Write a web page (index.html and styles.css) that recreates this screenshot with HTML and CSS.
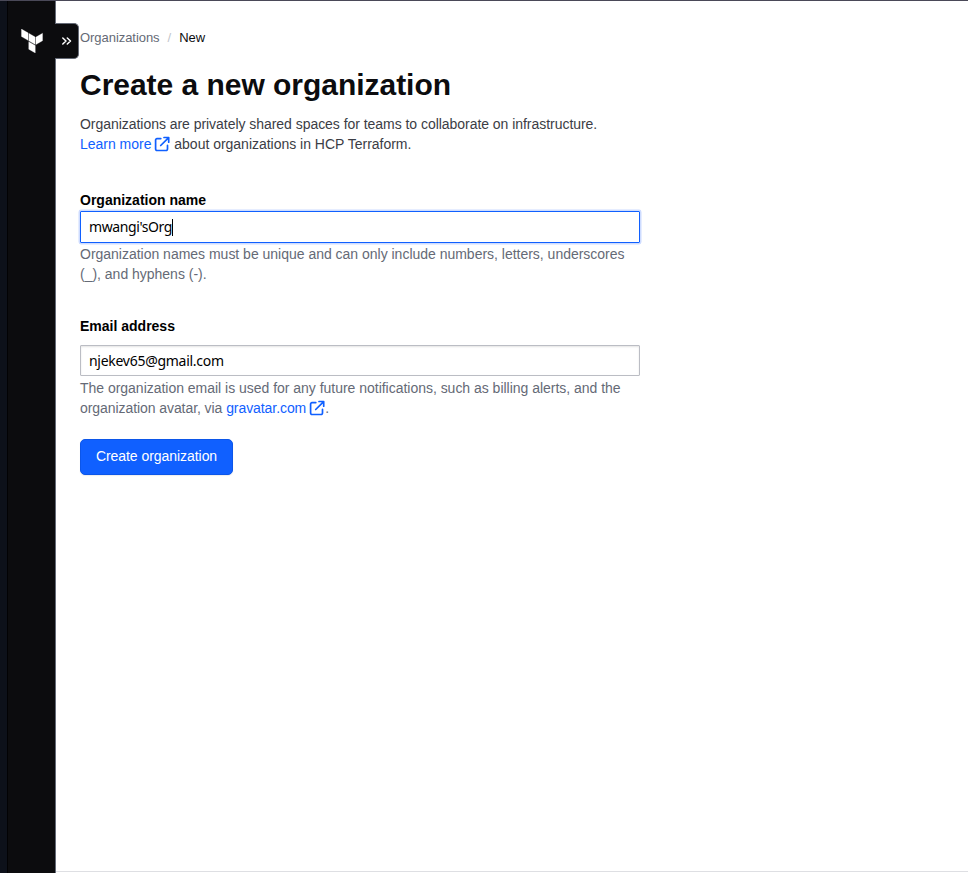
FILE: index.html
```html
<!DOCTYPE html>
<html lang="en">
<head>
<meta charset="utf-8">
<title>Create a new organization</title>
<link rel="stylesheet" href="styles.css">
</head>
<body>
<svg class="defs" aria-hidden="true">
  <symbol id="external" viewBox="0 0 16 16">
    <path d="M10 1.5h4.7v4.7M14.4 1.8 6.7 9.5M6.8 2.6H3a1.4 1.4 0 0 0-1.4 1.4v9.1A1.4 1.4 0 0 0 3 14.5h9.1a1.4 1.4 0 0 0 1.4-1.4V9.4" fill="none" stroke="currentColor" stroke-width="1.7" stroke-linecap="round" stroke-linejoin="round"/>
  </symbol>
</svg>
<div class="app">
  <div class="edge"></div>
  <nav class="sidebar">
    <svg class="logo" viewBox="0 0 24 24" fill="#fff" stroke="#fff" stroke-width=".25"><path d="M1.44 0v7.575l6.561 3.79V3.787zm21.12 4.227l-6.561 3.791v7.574l6.56-3.787zM8.72 4.23v7.575l6.561 3.787V8.018zm0 8.405v7.575L15.28 24v-7.578z"/></svg>
    <button class="toggle" aria-label="Open menu"><svg viewBox="0 0 16 16" fill="none" stroke="#fff" stroke-width="1.5" stroke-linecap="round" stroke-linejoin="round"><path d="m4.8 5 3.2 3-3.2 3M9.3 5l3.2 3-3.2 3"/></svg></button>
  </nav>
  <main class="content">
    <div class="crumbs"><span class="parent">Organizations</span><span class="slash">/</span><span>New</span></div>
    <h1>Create a new organization</h1>
    <p class="intro">Organizations are privately shared spaces for teams to collaborate on infrastructure.<br><span class="more"><a>Learn more<svg class="ext"><use href="#external"/></svg></a> about organizations in HCP Terraform.</span></p>
    <div class="label name-label">Organization name</div>
    <div class="input focused"><span class="name">mwangi'sOrg</span><span class="caret"></span></div>
    <p class="help">Organization names must be unique and can only include numbers, letters, underscores<br>(_), and hyphens (-).</p>
    <div class="label email-label">Email address</div>
    <div class="input"><span class="email">njekev65@gmail.com</span></div>
    <p class="help email-help">The organization email is used for any future notifications, such as billing alerts, and the<br><span class="via">organization avatar, via <a>gravatar.com<svg class="ext"><use href="#external"/></svg></a>.</span></p>
    <button class="submit">Create organization</button>
  </main>
</div>
</body>
</html>
```
FILE: styles.css
```css
* { box-sizing: border-box; }
body { margin: 0; background: #fff; color: #0c0c0e; font: 14px/20px "Liberation Sans", Arial, sans-serif; }
.defs { position: absolute; width: 0; height: 0; }
.app { display: flex; height: 873px; border-top: 1px solid #4a4958; overflow: hidden; }
.edge { width: 8px; background: #0d111a; border-right: 1px solid #020204; }
.sidebar { position: relative; width: 48px; background: #0c0c0e; border-right: 1px solid #656a76; }
.logo { display: block; width: 24px; height: 24px; margin: 28px 0 0 12px; }
.toggle { position: absolute; left: 47px; top: 22px; width: 24px; height: 36px; padding: 0; border: 1px solid #656a76; border-left: 0; border-radius: 0 5px 5px 0; background: #0c0c0e; }
.toggle svg { display: block; width: 16px; height: 16px; margin: -1px 0 0 3px; }
.content { flex: 1; height: 871px; padding: 27px 0 0 24px; border-bottom: 1px solid #dedfe3; }
.edge, .sidebar { flex: none; }
.crumbs { display: flex; font-size: 13px; line-height: 20px; letter-spacing: -.05px; }
.parent { color: #656a76; }
.slash { color: #c2c5cb; margin: 0 8px; }
h1 { margin: 18px 0 0; font-size: 30px; line-height: 38px; letter-spacing: -.03px; }
.intro { margin: 10px 0 0; color: #3b3d45; letter-spacing: -.04px; }
.more { letter-spacing: -.015px; }
a { color: #1060ff; }
.ext { width: 16px; height: 16px; margin-left: 3px; vertical-align: -3px; }
.label { font-weight: bold; color: #000; }
.name-label { margin-top: 36px; }
.email-label { margin: 32px 0 9px; }
.input { display: flex; align-items: center; width: 560px; height: 31px; padding: 0 8px; border: 1px solid #bbbdc4; border-radius: 1px; box-shadow: inset 0 1px 2px #0000001c; color: #000; font: 14px/20px "Noto Sans", sans-serif; }
.name { letter-spacing: -.4px; }
.email { letter-spacing: -.28px; }
.focused { height: 32px; margin: 1px 0; border-color: #1060ff; box-shadow: 0 0 0 1.5px #cedcff; }
.caret { width: 1px; height: 17px; background: #000; }
.help { margin: 2px 0 0; color: #656a76; letter-spacing: -.012px; }
.email-help { letter-spacing: -.02px; }
.via { letter-spacing: -.07px; }
.focused + .help { margin-top: 0; }
.submit { display: block; width: 153px; height: 36px; margin-top: 21px; padding: 0 0 2px; border: 1px solid #0c56e9; border-radius: 5px; background: #1060ff; color: #fff; font: 14px/20px "Liberation Sans", Arial, sans-serif; letter-spacing: -.05px; box-shadow: 0 1px 1px #656a7620; }
```
